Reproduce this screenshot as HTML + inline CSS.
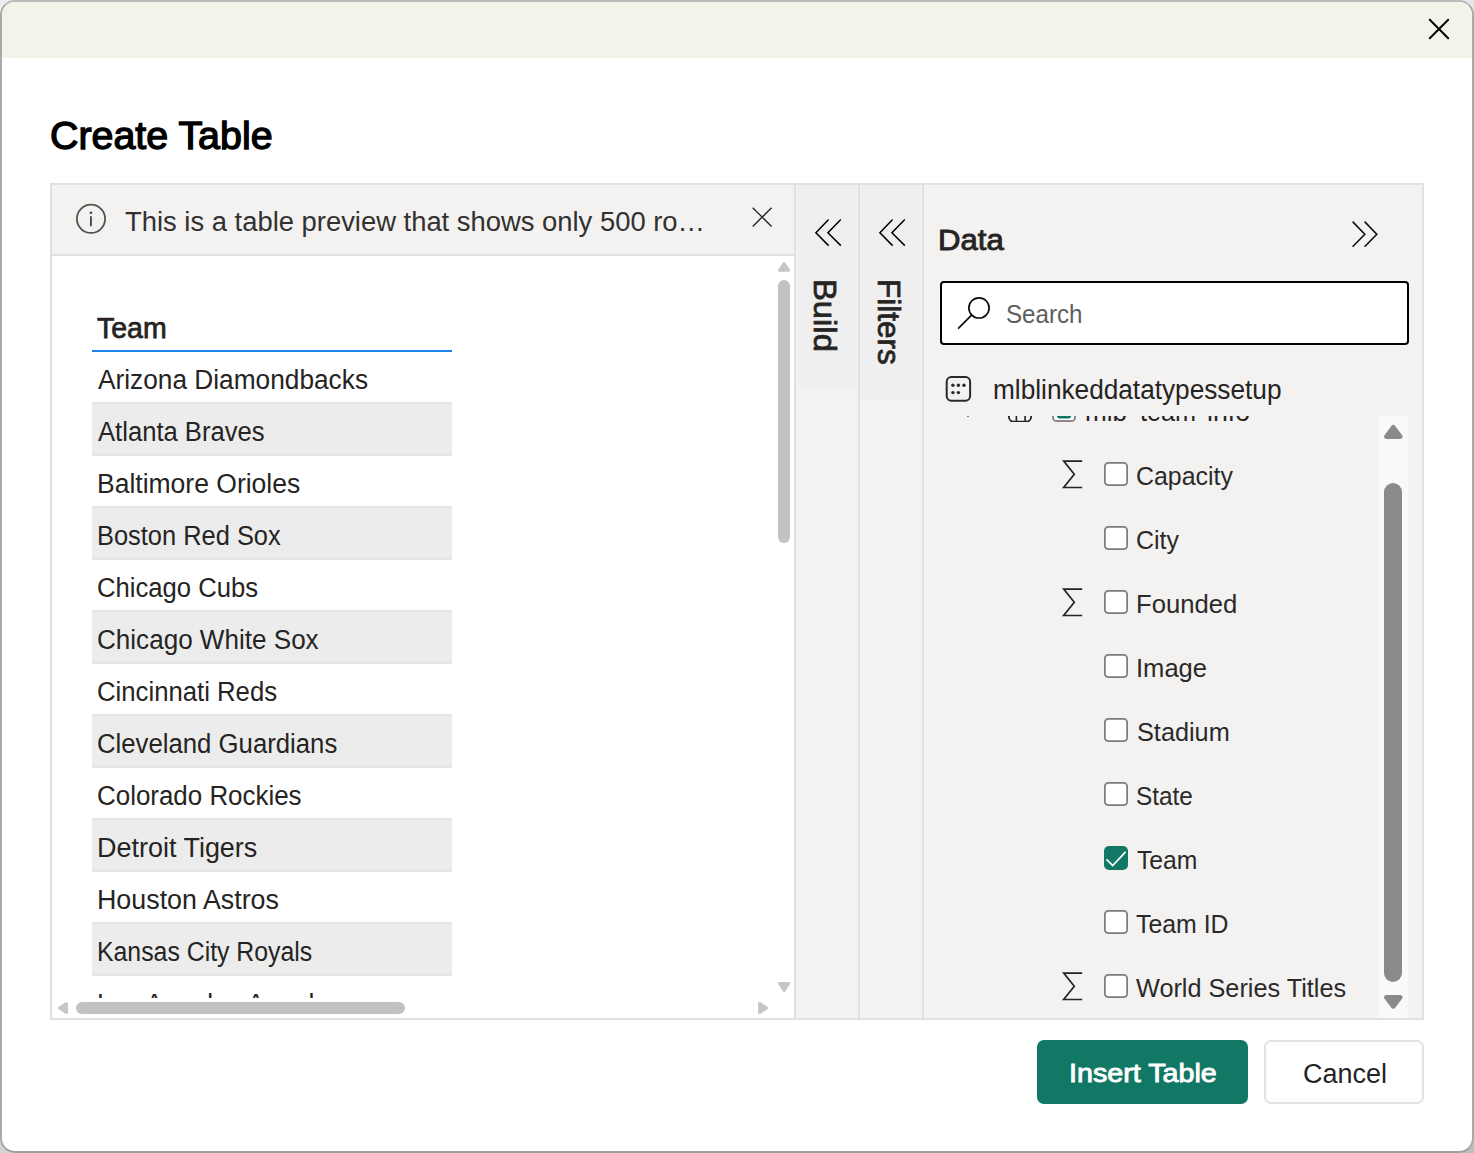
<!DOCTYPE html>
<html><head><meta charset="utf-8"><title>Create Table</title>
<style>
html,body{margin:0;padding:0;}
body{width:1474px;height:1153px;overflow:hidden;position:relative;background:#d9d9d9;font-family:"Liberation Sans", sans-serif;}
.abs{position:absolute;box-sizing:border-box;}
.t{position:absolute;white-space:nowrap;line-height:1;font-family:"Liberation Sans", sans-serif;}
svg{position:absolute;overflow:visible;}
</style></head><body>
<div class="abs" style="left:0;top:0;width:30px;height:30px;background:#ececec;"></div>
<div class="abs" style="left:1444px;top:0;width:30px;height:30px;background:#e6e6e6;"></div>
<div class="abs" style="left:0;top:1123px;width:30px;height:30px;background:#d2d2d2;"></div>
<div class="abs" style="left:1444px;top:1123px;width:30px;height:30px;background:#bdbdbd;"></div>
<div class="abs" id="dlg" style="left:0;top:0;width:1474px;height:1153px;border-radius:15px;border:2px solid #a9a9a9;border-top-color:#bababa;border-bottom-color:#9f9f9f;background:#fff;overflow:hidden;">
<div class="abs" style="left:0;top:0;width:1470px;height:56px;background:#f4f3ea;"></div>
</div>
<svg style="left:1428px;top:18px" width="22" height="22" viewBox="0 0 22 22"><path d="M1.8 1.8 L20.2 20.2 M20.2 1.8 L1.8 20.2" stroke="#000" stroke-width="2" stroke-linecap="round" fill="none"/></svg>
<div class="abs" style="left:50px;top:183px;width:1374px;height:837px;border:2px solid #e1e1e1;background:#f3f2f1;"></div>
<div class="abs" style="left:52px;top:256px;width:742.2px;height:762px;background:#fff;"></div>
<div class="abs" style="left:52px;top:254.2px;width:742.2px;height:1.8px;background:#e0e0e0;"></div>
<div class="abs" style="left:794.2px;top:185px;width:1.8px;height:833px;background:#e0e0e0;"></div>
<div class="abs" style="left:858.1px;top:185px;width:1.8px;height:833px;background:#e0e0e0;"></div>
<div class="abs" style="left:922px;top:185px;width:2px;height:833px;background:#e0e0e0;"></div>
<div class="abs" style="left:798px;top:185px;width:57.5px;height:201px;background:#efefef;"></div>
<div class="abs" style="left:861.7px;top:185px;width:58.4px;height:214px;background:#efefef;"></div>
<svg style="left:75px;top:203px" width="32" height="32" viewBox="0 0 32 32"><circle cx="16" cy="15.8" r="14.1" fill="none" stroke="#555350" stroke-width="1.8"/><rect x="15" y="13.2" width="1.9" height="10" fill="#4a4a4a"/><rect x="14.8" y="8.6" width="2.3" height="2.3" fill="#4a4a4a"/></svg>
<svg style="left:752px;top:207px" width="21" height="21" viewBox="0 0 21 21"><path d="M0.7 0.7 L19.6 19.4 M19.6 0.7 L0.7 19.4" stroke="#252423" stroke-width="1.4" fill="none"/></svg>
<div class="abs" style="left:52px;top:256px;width:722px;height:742px;overflow:hidden;">
<div class="abs" style="left:40px;top:146px;width:360px;height:54px;background:#ececec;border-top:2px solid #e4e4e4;border-bottom:2px solid #e4e4e4;"></div>
<div class="abs" style="left:40px;top:250px;width:360px;height:54px;background:#ececec;border-top:2px solid #e4e4e4;border-bottom:2px solid #e4e4e4;"></div>
<div class="abs" style="left:40px;top:354px;width:360px;height:54px;background:#ececec;border-top:2px solid #e4e4e4;border-bottom:2px solid #e4e4e4;"></div>
<div class="abs" style="left:40px;top:458px;width:360px;height:54px;background:#ececec;border-top:2px solid #e4e4e4;border-bottom:2px solid #e4e4e4;"></div>
<div class="abs" style="left:40px;top:562px;width:360px;height:54px;background:#ececec;border-top:2px solid #e4e4e4;border-bottom:2px solid #e4e4e4;"></div>
<div class="abs" style="left:40px;top:666px;width:360px;height:54px;background:#ececec;border-top:2px solid #e4e4e4;border-bottom:2px solid #e4e4e4;"></div>
<div class="abs" style="left:40px;top:94px;width:360px;height:2px;background:#1b86ea;"></div>
<span id="t-th" class="t" style="left:45.34px;top:58.44px;font-size:28.60px;font-weight:400;color:#252423;letter-spacing:0.000px;transform-origin:0 0;transform:scaleX(0.9960);-webkit-text-stroke:0.75px #252423;">Team</span>
<span id="t-r0" class="t" style="left:46.00px;top:111.10px;font-size:26.80px;font-weight:400;color:#252423;letter-spacing:0.000px;transform-origin:0 0;transform:scaleX(0.9799);">Arizona Diamondbacks</span>
<span id="t-r1" class="t" style="left:46.00px;top:163.12px;font-size:26.80px;font-weight:400;color:#252423;letter-spacing:0.000px;transform-origin:0 0;transform:scaleX(0.9560);">Atlanta Braves</span>
<span id="t-r2" class="t" style="left:45.37px;top:215.14px;font-size:26.80px;font-weight:400;color:#252423;letter-spacing:0.000px;transform-origin:0 0;transform:scaleX(0.9888);">Baltimore Orioles</span>
<span id="t-r3" class="t" style="left:44.55px;top:267.16px;font-size:26.80px;font-weight:400;color:#252423;letter-spacing:0.000px;transform-origin:0 0;transform:scaleX(0.9486);">Boston Red Sox</span>
<span id="t-r4" class="t" style="left:44.67px;top:319.18px;font-size:26.80px;font-weight:400;color:#252423;letter-spacing:0.000px;transform-origin:0 0;transform:scaleX(0.9573);">Chicago Cubs</span>
<span id="t-r5" class="t" style="left:44.56px;top:371.20px;font-size:26.80px;font-weight:400;color:#252423;letter-spacing:0.000px;transform-origin:0 0;transform:scaleX(0.9727);">Chicago White Sox</span>
<span id="t-r6" class="t" style="left:44.56px;top:423.22px;font-size:26.80px;font-weight:400;color:#252423;letter-spacing:0.000px;transform-origin:0 0;transform:scaleX(0.9595);">Cincinnati Reds</span>
<span id="t-r7" class="t" style="left:44.56px;top:475.24px;font-size:26.80px;font-weight:400;color:#252423;letter-spacing:0.000px;transform-origin:0 0;transform:scaleX(0.9602);">Cleveland Guardians</span>
<span id="t-r8" class="t" style="left:44.56px;top:527.26px;font-size:26.80px;font-weight:400;color:#252423;letter-spacing:0.000px;transform-origin:0 0;transform:scaleX(0.9673);">Colorado Rockies</span>
<span id="t-r9" class="t" style="left:45.11px;top:579.28px;font-size:26.80px;font-weight:400;color:#252423;letter-spacing:0.000px;transform-origin:0 0;transform:scaleX(1.0062);">Detroit Tigers</span>
<span id="t-r10" class="t" style="left:45.11px;top:631.30px;font-size:26.80px;font-weight:400;color:#252423;letter-spacing:0.000px;transform-origin:0 0;transform:scaleX(1.0011);">Houston Astros</span>
<span id="t-r11" class="t" style="left:44.95px;top:683.32px;font-size:26.80px;font-weight:400;color:#252423;letter-spacing:0.000px;transform-origin:0 0;transform:scaleX(0.9264);">Kansas City Royals</span>
<span id="t-r12" class="t" style="left:44.96px;top:735.34px;font-size:26.80px;font-weight:400;color:#252423;letter-spacing:0.000px;transform-origin:0 0;transform:scaleX(0.9863);">Los Angeles Angels</span>
</div>
<div class="abs" style="left:778px;top:280px;width:12px;height:263px;border-radius:6px;background:#c2c2c2;"></div>
<svg style="left:777.90px;top:262.00px" width="12.20" height="9.80" viewBox="0 0 12.20 9.80"><path d="M6.10 1.50 L10.70 8.30 L1.50 8.30 Z" fill="#c6c6c6" stroke="#c6c6c6" stroke-width="3.00" stroke-linejoin="round"/></svg>
<svg style="left:777.90px;top:982.00px" width="12.20" height="10.00" viewBox="0 0 12.20 10.00"><path d="M6.10 8.50 L10.70 1.50 L1.50 1.50 Z" fill="#c6c6c6" stroke="#c6c6c6" stroke-width="3.00" stroke-linejoin="round"/></svg>
<div class="abs" style="left:76px;top:1002px;width:329px;height:12px;border-radius:6px;background:#c2c2c2;"></div>
<svg style="left:58.00px;top:1002.00px" width="10.00" height="12.10" viewBox="0 0 10.00 12.10"><path d="M1.50 6.05 L8.50 1.50 L8.50 10.60 Z" fill="#c6c6c6" stroke="#c6c6c6" stroke-width="3.00" stroke-linejoin="round"/></svg>
<svg style="left:757.90px;top:1002.00px" width="10.10" height="12.10" viewBox="0 0 10.10 12.10"><path d="M8.60 6.05 L1.50 1.50 L1.50 10.60 Z" fill="#c6c6c6" stroke="#c6c6c6" stroke-width="3.00" stroke-linejoin="round"/></svg>
<svg style="left:814.7px;top:219px" width="28" height="28" viewBox="0 0 28 28"><path d="M13.6 0.5 L0.9 13.7 L13.6 26.6 M25.8 0.5 L12.9 13.7 L25.8 26.6" stroke="#000" stroke-width="1.5" fill="none"/></svg>
<svg style="left:878.7px;top:219px" width="28" height="28" viewBox="0 0 28 28"><path d="M13.6 0.5 L0.9 13.7 L13.6 26.6 M25.8 0.5 L12.9 13.7 L25.8 26.6" stroke="#000" stroke-width="1.5" fill="none"/></svg>
<svg style="left:1352px;top:221px" width="27" height="27" viewBox="0 0 27 27"><path d="M0.6 0.6 L12.8 13.2 L0.6 25.8 M12.6 0.6 L24.8 13.2 L12.6 25.8" stroke="#111" stroke-width="1.6" fill="none"/></svg>
<span id="t-build" class="t" style="left:814.31px;top:279.30px;font-size:31px;font-weight:400;-webkit-text-stroke:0.75px #252423;color:#252423;transform-origin:0 0;transform:translate(26px,0) rotate(90deg) scaleX(1.0573);">Build</span>
<span id="t-filters" class="t" style="left:877.98px;top:279.30px;font-size:31px;font-weight:400;-webkit-text-stroke:0.75px #252423;color:#252423;transform-origin:0 0;transform:translate(26px,0) rotate(90deg) scaleX(1.0162);">Filters</span>
<div class="abs" style="left:940px;top:281px;width:468.5px;height:64px;border:2px solid #000;border-radius:4px;background:#fff;"></div>
<svg style="left:955px;top:295px" width="40" height="40" viewBox="0 0 40 40"><circle cx="24" cy="12.9" r="10.1" fill="none" stroke="#0a0a0a" stroke-width="1.7"/><path d="M16.6 20.2 L3.6 33.2" stroke="#0a0a0a" stroke-width="1.7" stroke-linecap="round"/></svg>
<svg style="left:944px;top:374px" width="30" height="30" viewBox="0 0 30 30"><rect x="2.7" y="3.1" width="23.4" height="23.6" rx="4.6" fill="none" stroke="#2a2a2a" stroke-width="2"/><g fill="#2a2a2a"><circle cx="8.9" cy="11.3" r="1.7"/><circle cx="14.4" cy="11.3" r="1.7"/><circle cx="20" cy="11.3" r="1.7"/><circle cx="8.9" cy="18.6" r="1.7"/><circle cx="14.4" cy="18.6" r="1.7"/></g></svg>
<div class="abs" style="left:1378px;top:416px;width:30px;height:602px;background:#faf9f8;"></div>
<div class="abs" style="left:1384px;top:483px;width:18px;height:498.5px;border-radius:9px;background:#8a8a8a;"></div>
<svg style="left:1383.70px;top:425.00px" width="18.60" height="14.00" viewBox="0 0 18.60 14.00"><path d="M9.30 2.40 L16.20 11.60 L2.40 11.60 Z" fill="#8a8a8a" stroke="#8a8a8a" stroke-width="4.80" stroke-linejoin="round"/></svg>
<svg style="left:1383.70px;top:995.30px" width="18.60" height="13.70" viewBox="0 0 18.60 13.70"><path d="M9.30 11.30 L16.20 2.40 L2.40 2.40 Z" fill="#8a8a8a" stroke="#8a8a8a" stroke-width="4.80" stroke-linejoin="round"/></svg>
<div class="abs" style="left:924px;top:416px;width:454px;height:6px;overflow:hidden;">
<span class="t" style="left:161.18px;top:-16.79px;font-size:26.8px;color:#252423;transform-origin:0 0;transform:scaleX(0.975);">mlb</span>
<span class="t" style="left:216.40px;top:-16.79px;font-size:26.8px;color:#252423;transform-origin:0 0;transform:scaleX(0.940);">team</span>
<span class="t" style="left:283.03px;top:-16.79px;font-size:26.8px;color:#252423;transform-origin:0 0;transform:scaleX(1.000);">info</span>
<svg style="left:84px;top:-19.5px" width="26" height="26" viewBox="0 0 26 26"><rect x="0.9" y="2" width="22.2" height="22.7" rx="5" fill="none" stroke="#222" stroke-width="1.8"/><path d="M8.4 2 L8.4 24.7 M17.1 2 L17.1 24.7" stroke="#222" stroke-width="1.6"/></svg>
<svg style="left:128px;top:-18.4px" width="24" height="24" viewBox="0 0 24 24"><rect x="1" y="1" width="22" height="22" rx="3.6" fill="#fff" stroke="#8a8886" stroke-width="2"/><rect x="4.9" y="4.9" width="14.4" height="15.6" rx="3" fill="#117865"/></svg>
<div class="abs" style="left:43px;top:0px;width:2px;height:1px;background:#777;"></div>
</div>
<svg style="left:1061px;top:458.6px" width="24" height="30" viewBox="0 0 24 30"><path d="M21.2 2.1 L2.7 2.1 L13.3 15.3 L2.7 28.5 L21.2 28.5" fill="none" stroke="#252525" stroke-width="1.7" stroke-linejoin="miter"/></svg>
<svg style="left:1104px;top:462.0px" width="24" height="24" viewBox="0 0 24 24"><rect x="0.85" y="0.85" width="22.3" height="22.3" rx="3.6" fill="#fff" stroke="#7d7b79" stroke-width="1.7"/></svg>
<svg style="left:1104px;top:526.0px" width="24" height="24" viewBox="0 0 24 24"><rect x="0.85" y="0.85" width="22.3" height="22.3" rx="3.6" fill="#fff" stroke="#7d7b79" stroke-width="1.7"/></svg>
<svg style="left:1061px;top:586.6px" width="24" height="30" viewBox="0 0 24 30"><path d="M21.2 2.1 L2.7 2.1 L13.3 15.3 L2.7 28.5 L21.2 28.5" fill="none" stroke="#252525" stroke-width="1.7" stroke-linejoin="miter"/></svg>
<svg style="left:1104px;top:590.0px" width="24" height="24" viewBox="0 0 24 24"><rect x="0.85" y="0.85" width="22.3" height="22.3" rx="3.6" fill="#fff" stroke="#7d7b79" stroke-width="1.7"/></svg>
<svg style="left:1104px;top:654.0px" width="24" height="24" viewBox="0 0 24 24"><rect x="0.85" y="0.85" width="22.3" height="22.3" rx="3.6" fill="#fff" stroke="#7d7b79" stroke-width="1.7"/></svg>
<svg style="left:1104px;top:718.0px" width="24" height="24" viewBox="0 0 24 24"><rect x="0.85" y="0.85" width="22.3" height="22.3" rx="3.6" fill="#fff" stroke="#7d7b79" stroke-width="1.7"/></svg>
<svg style="left:1104px;top:782.0px" width="24" height="24" viewBox="0 0 24 24"><rect x="0.85" y="0.85" width="22.3" height="22.3" rx="3.6" fill="#fff" stroke="#7d7b79" stroke-width="1.7"/></svg>
<div class="abs" style="left:1104px;top:846px;width:24px;height:24px;border-radius:5px;background:#117865;"></div>
<svg style="left:1104px;top:846.0px" width="24" height="24" viewBox="0 0 24 24"><path d="M2.5 13.3 L8.7 19.5 L21.6 5.8" fill="none" stroke="#fff" stroke-width="1.7"/></svg>
<svg style="left:1104px;top:910.0px" width="24" height="24" viewBox="0 0 24 24"><rect x="0.85" y="0.85" width="22.3" height="22.3" rx="3.6" fill="#fff" stroke="#7d7b79" stroke-width="1.7"/></svg>
<svg style="left:1061px;top:970.6px" width="24" height="30" viewBox="0 0 24 30"><path d="M21.2 2.1 L2.7 2.1 L13.3 15.3 L2.7 28.5 L21.2 28.5" fill="none" stroke="#252525" stroke-width="1.7" stroke-linejoin="miter"/></svg>
<svg style="left:1104px;top:974.0px" width="24" height="24" viewBox="0 0 24 24"><rect x="0.85" y="0.85" width="22.3" height="22.3" rx="3.6" fill="#fff" stroke="#7d7b79" stroke-width="1.7"/></svg>
<div class="abs" style="left:1037px;top:1040px;width:211px;height:64px;border-radius:7px;background:#117865;"></div>
<div class="abs" style="left:1264px;top:1040px;width:160px;height:64px;border-radius:7px;border:2px solid #e3e3e3;background:#fff;"></div>
<span id="t-title" class="t" style="left:50.02px;top:117.30px;font-size:38.00px;font-weight:400;color:#000;letter-spacing:0.000px;transform-origin:0 0;transform:scaleX(1.0361);-webkit-text-stroke:1.30px #000;">Create Table</span>
<span id="t-info" class="t" style="left:124.56px;top:208.73px;font-size:26.80px;font-weight:400;color:#323130;letter-spacing:0.000px;transform-origin:0 0;transform:scaleX(1.0220);">This is a table preview that shows only 500 ro…</span>
<span id="t-data" class="t" style="left:938.30px;top:225.48px;font-size:29.80px;font-weight:400;color:#252423;letter-spacing:0.000px;transform-origin:0 0;transform:scaleX(1.0447);-webkit-text-stroke:0.90px #252423;">Data</span>
<span id="t-search" class="t" style="left:1005.95px;top:302.14px;font-size:25.00px;font-weight:400;color:#605e5c;letter-spacing:0.000px;transform-origin:0 0;transform:scaleX(0.9661);">Search</span>
<span id="t-ds" class="t" style="left:992.97px;top:376.63px;font-size:26.80px;font-weight:400;color:#252423;letter-spacing:0.000px;transform-origin:0 0;transform:scaleX(0.9781);">mlblinkeddatatypessetup</span>
<span id="t-f0" class="t" style="left:1135.73px;top:463.48px;font-size:26.30px;font-weight:400;color:#2b2a29;letter-spacing:0.000px;transform-origin:0 0;transform:scaleX(0.9475);">Capacity</span>
<span id="t-f1" class="t" style="left:1135.73px;top:527.48px;font-size:26.30px;font-weight:400;color:#2b2a29;letter-spacing:0.000px;transform-origin:0 0;transform:scaleX(0.9493);">City</span>
<span id="t-f2" class="t" style="left:1136.27px;top:591.48px;font-size:26.30px;font-weight:400;color:#2b2a29;letter-spacing:0.000px;transform-origin:0 0;transform:scaleX(0.9752);">Founded</span>
<span id="t-f3" class="t" style="left:1136.22px;top:655.48px;font-size:26.30px;font-weight:400;color:#2b2a29;letter-spacing:0.000px;transform-origin:0 0;transform:scaleX(0.9716);">Image</span>
<span id="t-f4" class="t" style="left:1136.62px;top:719.48px;font-size:26.30px;font-weight:400;color:#2b2a29;letter-spacing:0.000px;transform-origin:0 0;transform:scaleX(0.9610);">Stadium</span>
<span id="t-f5" class="t" style="left:1136.19px;top:783.48px;font-size:26.30px;font-weight:400;color:#2b2a29;letter-spacing:0.000px;transform-origin:0 0;transform:scaleX(0.9272);">State</span>
<span id="t-f6" class="t" style="left:1136.53px;top:847.48px;font-size:26.30px;font-weight:400;color:#2b2a29;letter-spacing:0.000px;transform-origin:0 0;transform:scaleX(0.9401);">Team</span>
<span id="t-f7" class="t" style="left:1136.14px;top:911.48px;font-size:26.30px;font-weight:400;color:#2b2a29;letter-spacing:0.000px;transform-origin:0 0;transform:scaleX(0.9456);">Team ID</span>
<span id="t-f8" class="t" style="left:1136.10px;top:975.48px;font-size:26.30px;font-weight:400;color:#2b2a29;letter-spacing:0.000px;transform-origin:0 0;transform:scaleX(0.9604);">World Series Titles</span>
<span id="t-insert" class="t" style="left:1069.01px;top:1060.05px;font-size:26.40px;font-weight:400;color:#fff;letter-spacing:0.000px;transform-origin:0 0;transform:scaleX(1.0864);-webkit-text-stroke:0.90px #fff;">Insert Table</span>
<span id="t-cancel" class="t" style="left:1302.52px;top:1061.08px;font-size:26.80px;font-weight:400;color:#252423;letter-spacing:0.000px;transform-origin:0 0;transform:scaleX(1.0068);">Cancel</span>
</body></html>
